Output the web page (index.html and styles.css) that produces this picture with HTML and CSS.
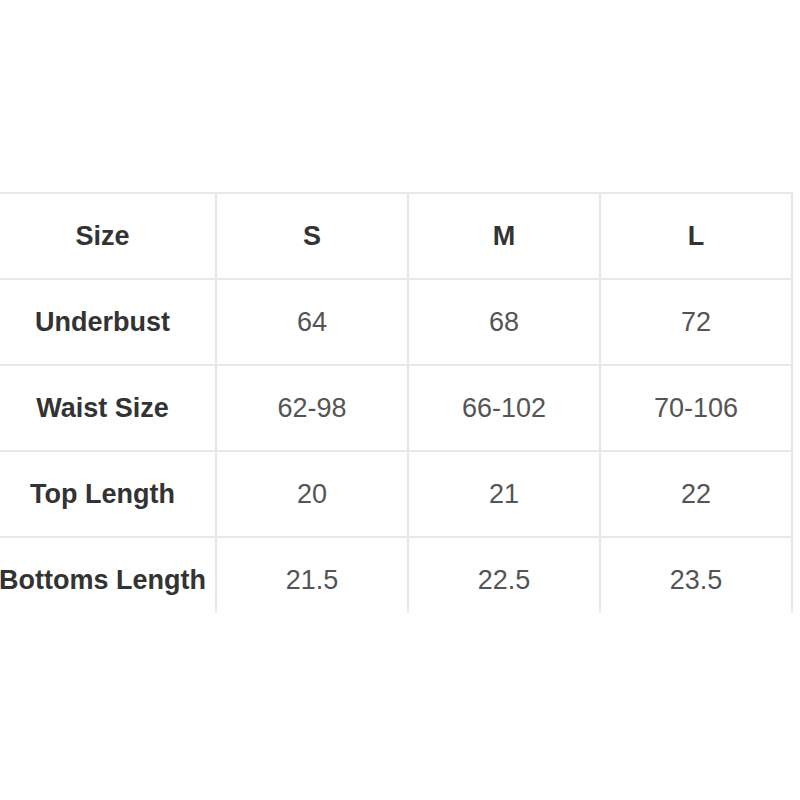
FILE: index.html
```html
<!DOCTYPE html>
<html>
<head>
<meta charset="utf-8">
<link rel="stylesheet" href="styles.css">
</head>
<body>
<div class="frame">
<table class="sizes">
  <colgroup>
    <col class="c-label"><col class="c-val"><col class="c-val"><col class="c-val">
  </colgroup>
  <tr class="head"><th>Size</th><th>S</th><th>M</th><th>L</th></tr>
  <tr><th>Underbust</th><td>64</td><td>68</td><td>72</td></tr>
  <tr><th>Waist Size</th><td>62-98</td><td>66-102</td><td>70-106</td></tr>
  <tr><th>Top Length</th><td>20</td><td>21</td><td>22</td></tr>
  <tr><th>Bottoms Length</th><td>21.5</td><td>22.5</td><td>23.5</td></tr>
</table>
</div>
</body>
</html>
```
FILE: styles.css
```css
html, body {
  margin: 0;
  padding: 0;
  background: #fff;
}
.frame {
  margin-top: 192px;
  height: 421px;
  overflow: hidden;
}
.sizes {
  margin-left: -10px;
  border-collapse: collapse;
  table-layout: fixed;
  width: 801px;
  font-family: "Liberation Sans", Arial, sans-serif;
  font-size: 27px;
}
.c-label { width: 226px; }
.c-val { width: 192px; }
.sizes th, .sizes td {
  border: 2px solid #e8e8e8;
  height: 84px;
  padding: 0;
  text-align: center;
  vertical-align: middle;
  white-space: nowrap;
  line-height: 1;
}
.sizes th {
  font-weight: bold;
  color: #333;
}
.sizes td {
  color: #555;
}
.sizes tr th:first-child { border-left: none; }
```
